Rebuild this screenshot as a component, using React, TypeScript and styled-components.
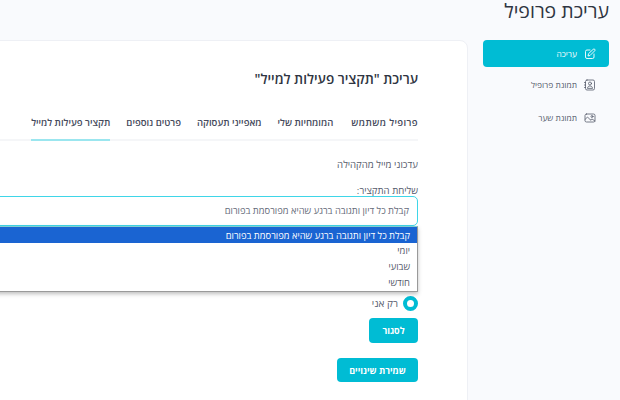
import React from "react";
import styled, { createGlobalStyle } from "styled-components";

const Global = createGlobalStyle`
  html, body { margin: 0; padding: 0; width: 620px; height: 400px; overflow: hidden; background: #f9fafd; }
  * { box-sizing: border-box; }
`;
const Page = styled.div`
  direction: rtl; width: 620px; height: 400px; overflow: hidden;
  padding-right: 11px; font-family: "Open Sans", "Noto Sans", sans-serif; color: #3f4254;
`;
const Title = styled.h1`
  margin: 0; height: 40px; font-size: 19.5px; font-weight: 400; line-height: 22px; color: #2f3542;
`;
const Columns = styled.div`
  display: flex; gap: 15px; align-items: flex-start;
`;
const Sidebar = styled.nav`
  flex: none; width: 126px; display: flex; flex-direction: column; gap: 6px;
`;
const NavItem = styled.div<{ $active?: boolean }>`
  height: 27px; margin-bottom: ${p => (p.$active ? "-2px" : "0")};
  display: flex; align-items: center; gap: 7px; padding-right: 13px;
  font-size: 8.4px; border-radius: 4px;
  color: ${p => (p.$active ? "#fff" : "#555a6b")};
  background: ${p => (p.$active ? "#00bcd4" : "transparent")};
  svg { flex: none; }
`;
const Card = styled.main`
  flex: none; width: 640px; height: 400px; background: #fff;
  border: 1px solid #eef0f5; border-radius: 8px; padding: 29px 49px 0 0;
`;
const CardTitle = styled.h2`
  margin: 0 0 26px; font-size: 13.6px; line-height: 18px; font-weight: 600; color: #2f3542;
`;
const Tabs = styled.div`
  display: flex; gap: 16px; height: 27px; border-bottom: 2px solid #f5f6f8; margin-bottom: 17px;
`;
const Tab = styled.div<{ $active?: boolean }>`
  height: 27px; padding-top: 2px; font-size: 9.5px; line-height: 14px; font-weight: 600; color: #454a5c; white-space: nowrap;
  border-bottom: 2px solid ${p => (p.$active ? "#9be6ef" : "transparent")};
  &:first-child { margin-left: 2px; letter-spacing: .4px; }
`;
const Section = styled.div`
  font-size: 9.6px; line-height: 14px; color: #555a6b; margin-bottom: 13px;
`;
const Label = styled.div`
  font-size: 9.6px; line-height: 12px; color: #555a6b; margin-bottom: -1px;
`;
const SelectWrap = styled.div`
  position: relative; margin-bottom: 70px;
`;
const SelectBox = styled.div`
  height: 30px; border: 1px solid #3fd6e8; border-radius: 5px; padding-right: 8px;
  font-size: 9.35px; line-height: 28px; color: #666b7a;
`;
const Dropdown = styled.div`
  position: absolute; top: 30px; left: 0; right: 0; height: 66px; background: #fff;
  border: 1px solid #9a9a9a; border-top-color: #7fcfd0; box-shadow: 0 2px 4px rgba(0,0,0,.25);
`;
const Option = styled.div<{ $selected?: boolean }>`
  height: 16px; padding-right: 7px; font-size: 9.35px; line-height: ${p => (p.$selected ? "17px" : "16px")};
  color: ${p => (p.$selected ? "#fff" : "#555a6b")};
  background: ${p => (p.$selected ? "#1a64d2" : "transparent")};
`;
const RadioRow = styled.label`
  display: flex; align-items: center; gap: 5px; height: 14px; font-size: 10px; color: #555a6b; margin-bottom: 8px;
`;
const RadioDot = styled.span`
  flex: none; width: 15px; height: 15px; border-radius: 50%; border: 4px solid #00bcd4; background: #fff;
`;
const Button = styled.button`
  display: block; border: 0; border-radius: 4px; background: #00bcd4; color: #fff;
  font: 700 9px "Open Sans", sans-serif; height: 25px; padding: 0;
`;
const Close = styled(Button)`
  width: 49px; margin-bottom: 15px;
`;
const Save = styled(Button)`
  width: 81px; height: 24px;
`;

const Edit = () => (
  <svg width="12" height="12" viewBox="0 0 24 24" fill="none" stroke="currentColor" strokeWidth="1.8" strokeLinecap="round" strokeLinejoin="round">
    <path d="M12 4H6a3 3 0 0 0-3 3v11a3 3 0 0 0 3 3h11a3 3 0 0 0 3-3v-6" />
    <path d="M18.5 2.500a2.100 2.100 0 0 1 3 3L12 15l-4 1 1-4z" />
  </svg>
);
const Contact = () => (
  <svg width="12" height="12" viewBox="0 0 24 24" fill="none" stroke="currentColor" strokeWidth="1.6" strokeLinecap="round" strokeLinejoin="round">
    <rect x="3" y="2" width="18" height="20" rx="3" />
    <circle cx="12" cy="9" r="3" />
    <path d="M7 18c.6-3 2.500-4 5-4s4.400 1 5 4z" />
    <path d="M1 7h2M1 12h2M1 17h2" />
  </svg>
);
const Cover = () => (
  <svg width="12" height="12" viewBox="0 0 24 24" fill="none" stroke="currentColor" strokeWidth="1.6" strokeLinecap="round" strokeLinejoin="round">
    <rect x="2" y="4" width="20" height="16" rx="3" />
    <circle cx="16" cy="9" r="2" />
    <path d="M2 15l5-5 6 6M13 16l3-2 6 4" />
  </svg>
);

const OPTIONS = ["קבלת כל דיון ותגובה ברגע שהיא מפורסמת בפורום", "יומי", "שבועי", "חודשי"];

export default function App() {
  return (
    <Page>
      <Global />
      <Title>עריכת פרופיל</Title>
      <Columns>
        <Sidebar>
          <NavItem $active><Edit />עריכה</NavItem>
          <NavItem><Contact />תמונת פרופיל</NavItem>
          <NavItem><Cover />תמונת שער</NavItem>
        </Sidebar>
        <Card>
          <CardTitle>עריכת "תקציר פעילות למייל"</CardTitle>
          <Tabs>
            <Tab>פרופיל משתמש</Tab>
            <Tab>המומחיות שלי</Tab>
            <Tab>מאפייני תעסוקה</Tab>
            <Tab>פרטים נוספים</Tab>
            <Tab $active>תקציר פעילות למייל</Tab>
          </Tabs>
          <Section>עדכוני מייל מהקהילה</Section>
          <Label>שליחת התקציר:</Label>
          <SelectWrap>
            <SelectBox>{OPTIONS[0]}</SelectBox>
            <Dropdown>
              {OPTIONS.map((o, i) => <Option key={o} $selected={i === 0}>{o}</Option>)}
            </Dropdown>
          </SelectWrap>
          <RadioRow><RadioDot />רק אני</RadioRow>
          <Close>לסגור</Close>
          <Save>שמירת שינויים</Save>
        </Card>
      </Columns>
    </Page>
  );
}
